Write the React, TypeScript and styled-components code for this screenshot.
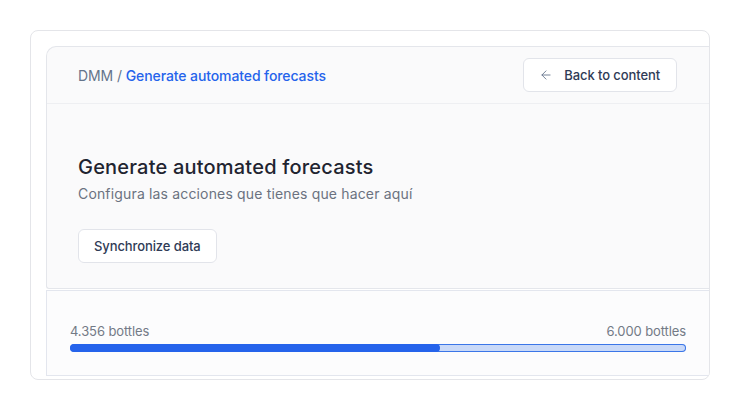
import * as React from 'react';
import styled, { createGlobalStyle } from 'styled-components';
import { ArrowLeft } from 'lucide-react';

const GlobalStyle = createGlobalStyle`
  html, body {
    margin: 0;
    padding: 0;
    background: #ffffff;
  }
  body {
    font-family: Inter, "Noto Sans", "Liberation Sans", sans-serif;
    -webkit-font-smoothing: antialiased;
  }
`;

const Page = styled.div`
  padding: 30px 30px 0 30px;
  width: 740px;
  box-sizing: border-box;
`;

const Frame = styled.div`
  width: 680px;
  box-sizing: border-box;
  border: 1px solid #e4e5e9;
  border-radius: 8px;
  padding: 15px 0 3px 15px;
  overflow: hidden;
  display: flex;
  flex-direction: column;
`;

const Card = styled.div`
  background: #fafafb;
  border: 1px solid #e4e6eb;
  border-right: none;
  border-radius: 10px 0 0 3px;
`;

const Header = styled.div`
  height: 56px;
  padding: 0 32px 0 31px;
  display: flex;
  align-items: center;
  justify-content: space-between;
  border-bottom: 1px solid #eeeff2;
`;

const Crumbs = styled.div`
  font-size: 14px;
  color: #64748b;
  letter-spacing: -0.1px;
`;

const CrumbCurrent = styled.span`
  color: #2563eb;
  font-weight: 500;
`;

const Button = styled.button<{ $compact?: boolean }>`
  height: 34px;
  display: inline-flex;
  align-items: center;
  gap: 11px;
  padding: ${(p) => (p.$compact ? '0 16px 0 15px' : '0 15px')};
  background: #ffffff;
  border: 1px solid #e2e4ea;
  border-radius: 6px;
  font-family: inherit;
  font-size: 13px;
  font-weight: 500;
  color: #2f3b56;
  letter-spacing: -0.1px;
  cursor: pointer;

  svg {
    color: #64748b;
  }
`;

const Body = styled.div`
  padding: 49px 32px 25px 31px;
  display: flex;
  flex-direction: column;
  align-items: flex-start;
`;

const Title = styled.h1`
  margin: 0;
  font-size: 20px;
  line-height: 28px;
  font-weight: 500;
  color: #1f2430;
  letter-spacing: 0.2px;
`;

const Subtitle = styled.p`
  margin: 3px 0 25px;
  font-size: 14px;
  line-height: 20px;
  color: #6b7280;
  letter-spacing: 0.16px;
`;

const Usage = styled.div`
  margin-top: 1px;
  background: #fcfcfd;
  border: 1px solid #e3e6ee;
  border-right: none;
  padding: 31px 23px 23px 23px;
  display: flex;
  flex-direction: column;
  gap: 4px;
`;

const Labels = styled.div`
  display: flex;
  justify-content: space-between;
  font-size: 13px;
  line-height: 18px;
  color: #737a86;
  letter-spacing: -0.1px;
`;

const Track = styled.div`
  height: 8px;
  border-radius: 999px;
  background: #c9d9f8;
  box-shadow: inset 0 0 0 1px #3b76e8;
  overflow: hidden;
`;

const Fill = styled.div`
  height: 100%;
  border-radius: 999px;
  background: #2563eb;
`;

const progress = 0.6;

export default function App() {
  return (
    <Page>
      <GlobalStyle />
      <Frame>
        <Card>
          <Header>
            <Crumbs>
              DMM / <CrumbCurrent>Generate automated forecasts</CrumbCurrent>
            </Crumbs>
            <Button $compact>
              <ArrowLeft size={14} strokeWidth={1.5} />
              Back to content
            </Button>
          </Header>
          <Body>
            <Title>Generate automated forecasts</Title>
            <Subtitle>Configura las acciones que tienes que hacer aquí</Subtitle>
            <Button>Synchronize data</Button>
          </Body>
        </Card>
        <Usage>
          <Labels>
            <span>4.356 bottles</span>
            <span>6.000 bottles</span>
          </Labels>
          <Track>
            <Fill style={{ width: `${progress * 100}%` }} />
          </Track>
        </Usage>
      </Frame>
    </Page>
  );
}
